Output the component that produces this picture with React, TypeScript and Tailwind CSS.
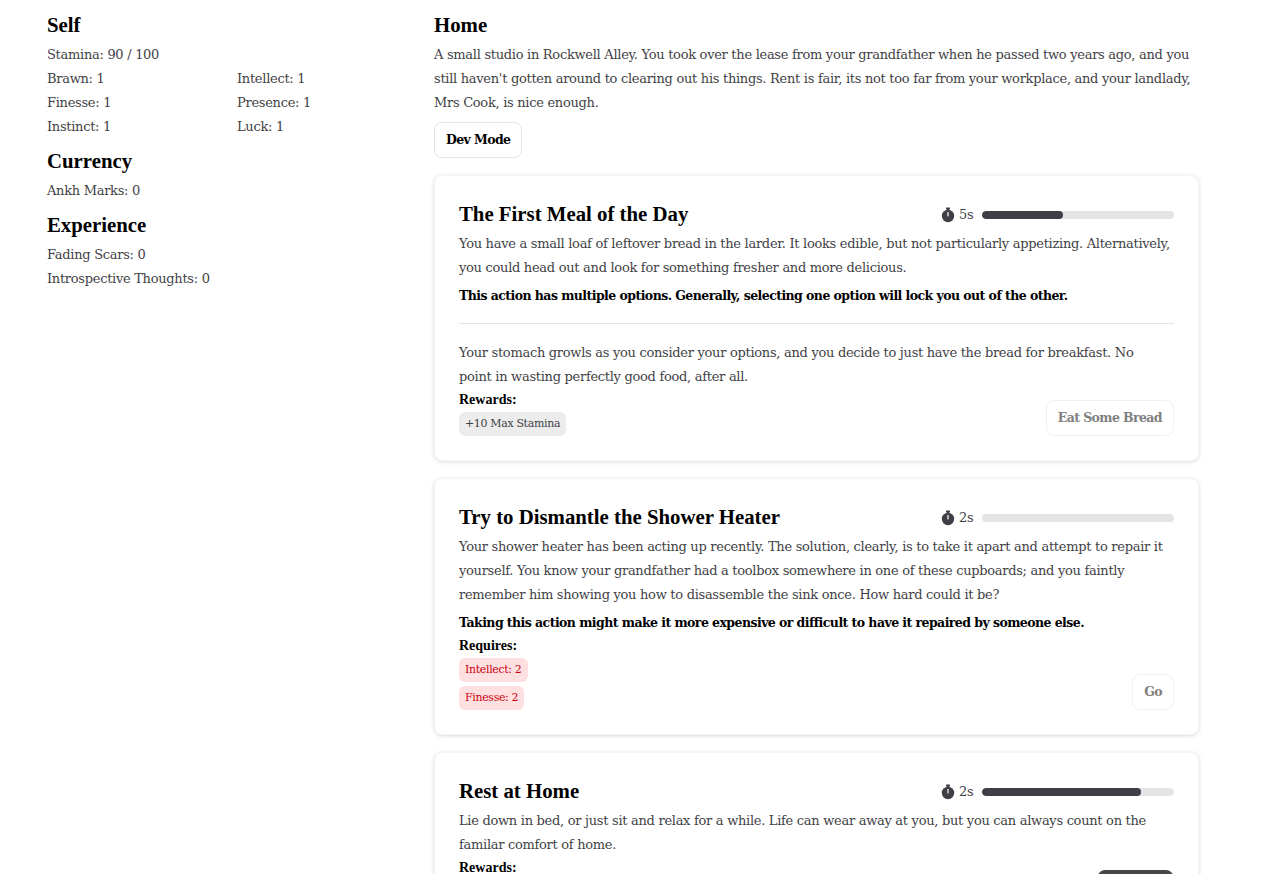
import React from "react";

const body = "font-['DejaVu_Serif',serif] text-[13px] leading-6 tracking-[-0.29px] text-[#3f3f46]";
const boldLine = "font-['DejaVu_Serif',serif] text-[12.5px] font-bold leading-6 tracking-[-0.56px] text-black";
const head = "font-['Liberation_Serif',serif] font-bold text-[20.8px] leading-[30px] mb-[3px] text-black";

function Timer() {
  return (
    <svg width="14" height="16" viewBox="0 0 14 16" className="shrink-0">
      <rect x="5" y="0.5" width="4" height="2" rx="0.5" fill="#3f3f46" />
      <rect x="6" y="2" width="2" height="2" fill="#3f3f46" />
      <circle cx="7" cy="9" r="6.2" fill="#3f3f46" />
      <rect x="6.4" y="5" width="1.2" height="4.4" fill="#ffffff" />
    </svg>
  );
}

function Meter({ time, pct }: { time: string; pct: number }) {
  return (
    <div className="mt-[2px] flex items-center">
      <Timer />
      <span className={body + " ml-[4px] w-[22px]"}>{time}</span>
      <div className="ml-[1px] h-2 w-[192px] overflow-hidden rounded-full bg-[#e4e4e7]">
        <div className="h-full rounded-full bg-[#3f3f46]" style={{ width: `${pct}%` }} />
      </div>
    </div>
  );
}

function Title({ text, time, pct }: { text: string; time: string; pct: number }) {
  return (
    <div className="flex h-7 items-center justify-between">
      <h3 className="font-['Liberation_Serif',serif] text-[20.8px] font-bold leading-7 text-black">{text}</h3>
      <Meter time={time} pct={pct} />
    </div>
  );
}

function Pill({ children, red }: { children: React.ReactNode; red?: boolean }) {
  return (
    <span
      className={
        "inline-flex h-6 items-center rounded-md px-[6px] pt-[1px] font-['DejaVu_Serif',serif] text-[11px] tracking-[-0.35px] " +
        (red ? "bg-[#ffe0e0] text-[#cc0011]" : "bg-[#ececec] text-[#3f3f46]")
      }
    >
      {children}
    </span>
  );
}

function Label({ children }: { children: React.ReactNode }) {
  return <div className="font-['Liberation_Serif',serif] text-[14px] font-bold leading-[22px] text-black">{children}</div>;
}

function Btn({ children, disabled, dark }: { children: React.ReactNode; disabled?: boolean; dark?: boolean }) {
  return (
    <button
      className={
        "h-9 rounded-lg border px-[11px] pt-[1px] font-['DejaVu_Serif',serif] text-[12.5px] font-bold tracking-[-0.6px] " +
        (dark
          ? "min-w-[77px] border-[#46464d] bg-[#46464d] text-white"
          : disabled
            ? "border-[#f0f0f0] bg-white text-[#808080]"
            : "border-[#e4e4e7] bg-white text-black")
      }
    >
      {children}
    </button>
  );
}

function Card({ children }: { children: React.ReactNode }) {
  return (
    <section className="rounded-lg border border-[#f5f5f5] bg-white p-6 shadow-[0_1px_4px_rgba(0,0,0,0.14)]">
      {children}
    </section>
  );
}

function Stat({ children }: { children: React.ReactNode }) {
  return <div className={body}>{children}</div>;
}

export default function App() {
  return (
    <div className="flex gap-[7px] bg-white pb-6 pl-[47px] pr-[65px] pt-[10px]">
      <aside className="w-[380px] shrink-0">
        <h2 className={head}>Self</h2>
        <Stat>Stamina: 90 / 100</Stat>
        <div className="grid grid-cols-2">
          <Stat>Brawn: 1</Stat>
          <Stat>Intellect: 1</Stat>
          <Stat>Finesse: 1</Stat>
          <Stat>Presence: 1</Stat>
          <Stat>Instinct: 1</Stat>
          <Stat>Luck: 1</Stat>
        </div>
        <h2 className={head + " mt-[7px]"}>Currency</h2>
        <Stat>Ankh Marks: 0</Stat>
        <h2 className={head + " mt-[7px]"}>Experience</h2>
        <Stat>Fading Scars: 0</Stat>
        <Stat>Introspective Thoughts: 0</Stat>
      </aside>
      <main className="min-w-0 flex-1">
        <h2 className={head}>Home</h2>
        <p className={body}>
          A small studio in Rockwell Alley. You took over the lease from your grandfather when he passed two years ago, and you
          still haven't gotten around to clearing out his things. Rent is fair, its not too far from your workplace, and your landlady,
          Mrs Cook, is nice enough.
        </p>
        <div className="mt-[7px]">
          <Btn>Dev Mode</Btn>
        </div>
        <div className="mt-[17px] flex flex-col gap-[17px]">
          <Card>
            <Title text="The First Meal of the Day" time="5s" pct={42} />
            <p className={body + " mt-1"}>
              You have a small loaf of leftover bread in the larder. It looks edible, but not particularly appetizing. Alternatively,
              you could head out and look for something fresher and more delicious.
            </p>
            <p className={boldLine + " mt-1"}>
              This action has multiple options. Generally, selecting one option will lock you out of the other.
            </p>
            <hr className="mb-[17px] mt-[15px] border-[#e4e4e7]" />
            <p className={body}>
              Your stomach growls as you consider your options, and you decide to just have the bread for breakfast. No
              <br />
              point in wasting perfectly good food, after all.
            </p>
            <div className="flex items-end justify-between">
              <div>
                <Label>Rewards:</Label>
                <div className="mt-[1px] flex">
                  <Pill>+10 Max Stamina</Pill>
                </div>
              </div>
              <Btn disabled>Eat Some Bread</Btn>
            </div>
          </Card>
          <Card>
            <Title text="Try to Dismantle the Shower Heater" time="2s" pct={0} />
            <p className={body + " mt-1"}>
              Your shower heater has been acting up recently. The solution, clearly, is to take it apart and attempt to repair it
              yourself. You know your grandfather had a toolbox somewhere in one of these cupboards; and you faintly
              remember him showing you how to disassemble the sink once. How hard could it be?
            </p>
            <p className={boldLine + " mt-1"}>
              Taking this action might make it more expensive or difficult to have it repaired by someone else.
            </p>
            <div className="flex items-end justify-between">
              <div>
                <Label>Requires:</Label>
                <div className="mt-[1px] flex flex-col items-start gap-1">
                  <Pill red>Intellect: 2</Pill>
                  <Pill red>Finesse: 2</Pill>
                </div>
              </div>
              <Btn disabled>Go</Btn>
            </div>
          </Card>
          <Card>
            <Title text="Rest at Home" time="2s" pct={83} />
            <p className={body + " mt-1"}>
              Lie down in bed, or just sit and relax for a while. Life can wear away at you, but you can always count on the
              familar comfort of home.
            </p>
            <div className="flex items-end justify-between">
              <div className="h-[49px]">
                <Label>Rewards:</Label>
              </div>
              <Btn dark>Rest Up</Btn>
            </div>
          </Card>
        </div>
      </main>
    </div>
  );
}
